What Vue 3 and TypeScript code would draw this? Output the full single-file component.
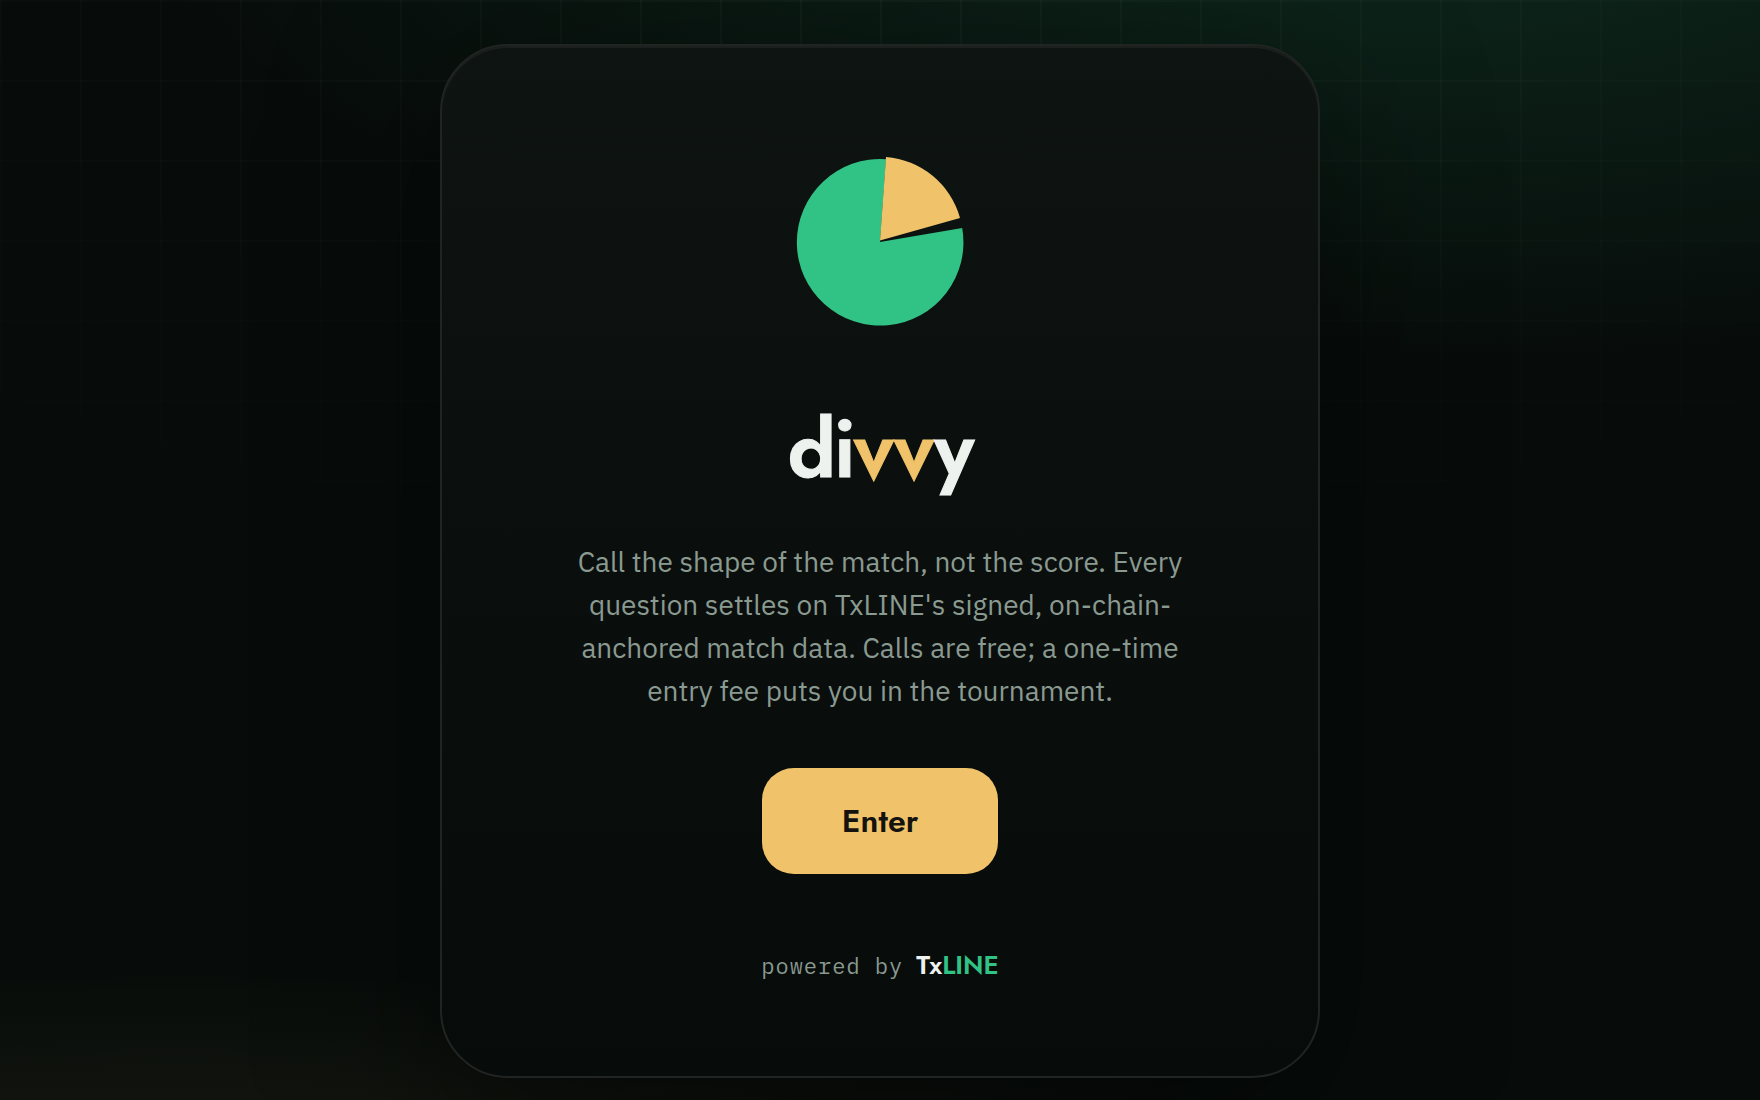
<script setup lang="ts">
const appName = 'divvy'
const enter = (): void => {
  window.location.hash = 'play'
}
</script>

<template>
  <main class="page">
    <section class="card" :aria-label="appName">
      <svg class="logo" viewBox="0 0 200 200" aria-hidden="true">
        <path d="M100 100 L182.2 86 A83.3 83.3 0 1 1 106 17.2 Z" fill="#31c285" />
        <path d="M100 98.5 L106 15 A83.5 83.5 0 0 1 180 76 Z" fill="#f0c36a" />
      </svg>
      <h1 class="wordmark">di<span class="gold">vv</span>y</h1>
      <p class="lede">
        Call the shape of the match, not the score. Every question settles on
        TxLINE's signed, on-chain-anchored match data. Calls are free; a
        one-time entry fee puts you in the tournament.
      </p>
      <button class="enter" type="button" @click="enter">Enter</button>
      <footer class="powered">
        <span class="by">powered by</span>
        <span class="brand">Tx<span class="green">LINE</span></span>
      </footer>
    </section>
  </main>
</template>

<style>
body {
  margin: 0;
  background: #070c0a;
}
</style>

<style scoped>
.page {
  position: relative;
  isolation: isolate;
  box-sizing: border-box;
  min-height: 100vh;
  padding: 44px 24px 20px;
  display: flex;
  justify-content: center;
  align-items: flex-start;
  overflow: hidden;
  background:
    radial-gradient(1250px 470px at 80% -110px, rgba(49, 194, 133, 0.16), transparent),
    radial-gradient(1200px 240px at 10% 110%, rgba(240, 195, 106, 0.08), transparent),
    #070c0a;
}

/* Faint pitch grid that fades out below the top of the page */
.page::before {
  content: '';
  position: absolute;
  inset: 0;
  z-index: -1;
  background-image:
    linear-gradient(rgba(255, 255, 255, 0.03) 2px, transparent 2px),
    linear-gradient(90deg, rgba(255, 255, 255, 0.03) 2px, transparent 2px);
  background-size: 80px 80px;
  -webkit-mask-image: radial-gradient(ellipse 90% 60% at 50% 0, #000, transparent);
  mask-image: radial-gradient(ellipse 90% 60% at 50% 0, #000, transparent);
}

.card {
  box-sizing: border-box;
  width: 100%;
  max-width: 880px;
  padding: 96px 132px 94px;
  display: flex;
  flex-direction: column;
  align-items: center;
  border: 2px solid #202423;
  border-radius: 68px;
  background: linear-gradient(#0e1412, #0a0f0d 50%, #070b0a);
  box-shadow:
    0 48px 160px rgba(0, 0, 0, 0.5),
    inset 0 2px 0 #1b201e;
  text-align: center;
}

.logo {
  width: 200px;
  height: 200px;
}

.wordmark {
  margin: 63px 0 0;
  font: 600 80px/88px Jost, Futura, Lato, sans-serif;
  letter-spacing: -2px;
  -webkit-text-stroke-width: 1px;
  color: #eef2ef;
}

.gold {
  color: #f0c36a;
}

.lede {
  margin: 47px 0 0;
  font: 400 28px/43px 'IBM Plex Sans', Roboto, sans-serif;
  color: #8a9a91;
}

.enter {
  margin: 56px 0 0;
  min-width: 236px;
  padding: 32px 72px;
  border: 0;
  border-radius: 32px;
  background: #f0c36a;
  color: #14130f;
  font: 600 32px/42px Jost, Futura, Lato, sans-serif;
  cursor: pointer;
}

.powered {
  margin: 75px 0 0;
  display: flex;
  align-items: baseline;
  gap: 13px;
  line-height: 32px;
}

.by {
  font-family: 'IBM Plex Mono', 'Liberation Mono', monospace;
  font-size: 22px;
  letter-spacing: 1px;
  color: #8a9a91;
}

.brand {
  font-family: Jost, Futura, Lato, sans-serif;
  font-size: 26px;
  font-weight: 600;
  color: #eef2ef;
}

.green {
  color: #31c285;
}
</style>
